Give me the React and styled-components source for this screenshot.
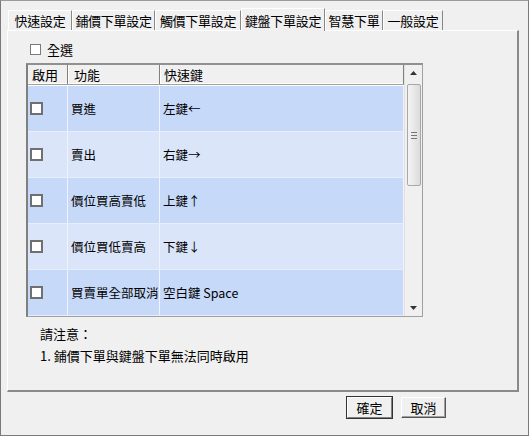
import React, { useState } from 'react'
import styled, { createGlobalStyle } from 'styled-components'

const Global = createGlobalStyle`
  html, body { margin: 0; padding: 0; background: #f0f0f0; }
  body {
    font-family: "Noto Sans CJK TC", "Liberation Sans", sans-serif;
    font-size: 13px;
    color: #000;
  }
`

const Window = styled.div`
  width: 529px;
  height: 436px;
  box-sizing: border-box;
  border: 1px solid #7a7a7a;
  border-top-color: #9a9a9a;
  background: #f0f0f0;
  display: flex;
  flex-direction: column;
  padding: 8px 9px 0 6px;
`

const TabBar = styled.div`
  display: flex;
  height: 21px;
  align-items: flex-end;
  position: relative;
  z-index: 1;
  padding-left: 1px;
`

const Tab = styled.div`
  width: ${p => p.$w}px;
  height: ${p => (p.$active ? '23px' : '20px')};
  margin-bottom: ${p => (p.$active ? '-1px' : '0')};
  display: flex;
  align-items: center;
  justify-content: center;
  box-sizing: border-box;
  background: #f0f0f0;
  border-top: 1px solid #fff;
  border-left: 1px solid #fff;
  border-right: 1px solid #888;
  white-space: nowrap;
  line-height: 1;
  letter-spacing: -0.3px;
`

const Panel = styled.div`
  height: 362px;
  box-sizing: border-box;
  border-top: 1px solid #fff;
  border-left: 1px solid #fff;
  border-right: 2px solid #8a8a8a;
  border-bottom: 2px solid #8a8a8a;
  padding: 11px 0 0 18px;
  display: flex;
  flex-direction: column;
`

const SelectAll = styled.label`
  display: flex;
  align-items: center;
  gap: 6px;
  margin-left: 4px;
  height: 16px;
  margin-top: -1px;
`

const Box = styled.span`
  width: 11px;
  height: 11px;
  box-sizing: border-box;
  border: 1px solid #7a7a7a;
  background: #fff;
  display: inline-block;
  flex: none;
`

const List = styled.div`
  margin-top: 6px;
  width: 397px;
  height: 254px;
  box-sizing: border-box;
  border: 1px solid #a0a0a0;
  border-left: 2px solid #808080;
  border-top: 2px solid #909090;
  display: flex;
  background: #fff;
`

const Body = styled.div`
  flex: 1;
  display: flex;
  flex-direction: column;
  overflow: hidden;
`

const Header = styled.div`
  height: 18px;
  display: grid;
  grid-template-columns: 40px 92px 1fr;
  background: #f0f0f0;
  border-bottom: 1px solid #fff;
  box-shadow: 0 1px 0 #a0a0a0;
  margin-bottom: 2px;
`

const HeadCell = styled.div`
  display: flex;
  align-items: center;
  padding-left: ${p => p.$pad || 6}px;
  border-right: 1px solid #808080;
  box-shadow: 1px 0 0 #fff;
`

const Row = styled.div`
  height: 46px;
  display: grid;
  grid-template-columns: 40px 92px 1fr;
  background: ${p => (p.$alt ? '#dae5fa' : '#c7d9f9')};
  border-bottom: 1px solid #e6edfb;
  box-sizing: border-box;
  font-size: 12.5px;
`

const Cell = styled.div`
  display: flex;
  align-items: center;
  padding-left: ${p => p.$pad || 0}px;
  border-right: 1px solid #eef3fd;
  white-space: nowrap;
  overflow: hidden;
`

const Check = styled(Box)`
  width: 13px;
  height: 13px;
  border: 2px solid #707070;
  margin-left: 2px;
`

const Scroll = styled.div`
  width: 17px;
  background: #f0f0f0;
  border-left: 1px solid #e0e0e0;
  display: flex;
  flex-direction: column;
  align-items: center;
`

const Arrow = styled.div`
  height: 16px;
  width: 100%;
  display: flex;
  align-items: center;
  justify-content: center;
`

const Thumb = styled.div`
  width: 14px;
  height: 102px;
  margin-top: 3px;
  box-sizing: border-box;
  border: 1px solid #a8a8a8;
  border-radius: 2px;
  background: linear-gradient(to right, #f4f4f4, #dcdcdc);
  display: flex;
  align-items: center;
  justify-content: center;
`

const Track = styled.div`
  flex: 1;
`

const Notes = styled.div`
  margin: 6px 0 0 14px;
  line-height: 22px;
`

const Footer = styled.div`
  display: flex;
  justify-content: flex-end;
  gap: 9px;
  padding: 5px 73px 0 0;
`

const Button = styled.button`
  width: 45px;
  height: 21px;
  padding: 0;
  font: inherit;
  background: #f0f0f0;
  border: 1px solid;
  border-color: #fff #555 #555 #fff;
  box-shadow: ${p => (p.$default ? '0 0 0 1px #333' : 'inset -1px -1px 0 #a0a0a0')};
  ${p => p.$default && 'border-color: #fff #808080 #808080 #fff;'}
`

const rows = [
  ['買進', '左鍵←'],
  ['賣出', '右鍵→'],
  ['價位買高賣低', '上鍵↑'],
  ['價位買低賣高', '下鍵↓'],
  ['買賣單全部取消', '空白鍵 Space'],
]

const tabs = [
  ['快速設定', 64],
  ['鋪價下單設定', 83],
  ['觸價下單設定', 86],
  ['鍵盤下單設定', 84],
  ['智慧下單', 58],
  ['一般設定', 60],
]

export default function App() {
  const [active] = useState(3)
  return (
    <>
      <Global />
      <Window>
        <TabBar>
          {tabs.map(([t, w], i) => (
            <Tab key={t} $w={w} $active={i === active}>{t}</Tab>
          ))}
        </TabBar>
        <Panel>
          <SelectAll>
            <Box />
            全選
          </SelectAll>
          <List>
            <Body>
              <Header>
                <HeadCell $pad={4}>啟用</HeadCell>
                <HeadCell>功能</HeadCell>
                <HeadCell $pad={4}>快速鍵</HeadCell>
              </Header>
              {rows.map(([f, k], i) => (
                <Row key={f} $alt={i % 2 === 1}>
                  <Cell><Check /></Cell>
                  <Cell $pad={3}>{f}</Cell>
                  <Cell $pad={3}>{k}</Cell>
                </Row>
              ))}
            </Body>
            <Scroll>
              <Arrow>
                <svg width="7" height="4" viewBox="0 0 7 4"><path d="M0 4 L3.5 0 L7 4 Z" fill="#333" /></svg>
              </Arrow>
              <Thumb>
                <svg width="6" height="7" viewBox="0 0 6 7">
                  <path d="M0 0.5H6M0 3.5H6M0 6.5H6" stroke="#777" strokeWidth="1" />
                </svg>
              </Thumb>
              <Track />
              <Arrow>
                <svg width="7" height="4" viewBox="0 0 7 4"><path d="M0 0 L3.5 4 L7 0 Z" fill="#333" /></svg>
              </Arrow>
            </Scroll>
          </List>
          <Notes>
            <div>請注意：</div>
            <div>1. 鋪價下單與鍵盤下單無法同時啟用</div>
          </Notes>
        </Panel>
        <Footer>
          <Button $default>確定</Button>
          <Button>取消</Button>
        </Footer>
      </Window>
    </>
  )
}
